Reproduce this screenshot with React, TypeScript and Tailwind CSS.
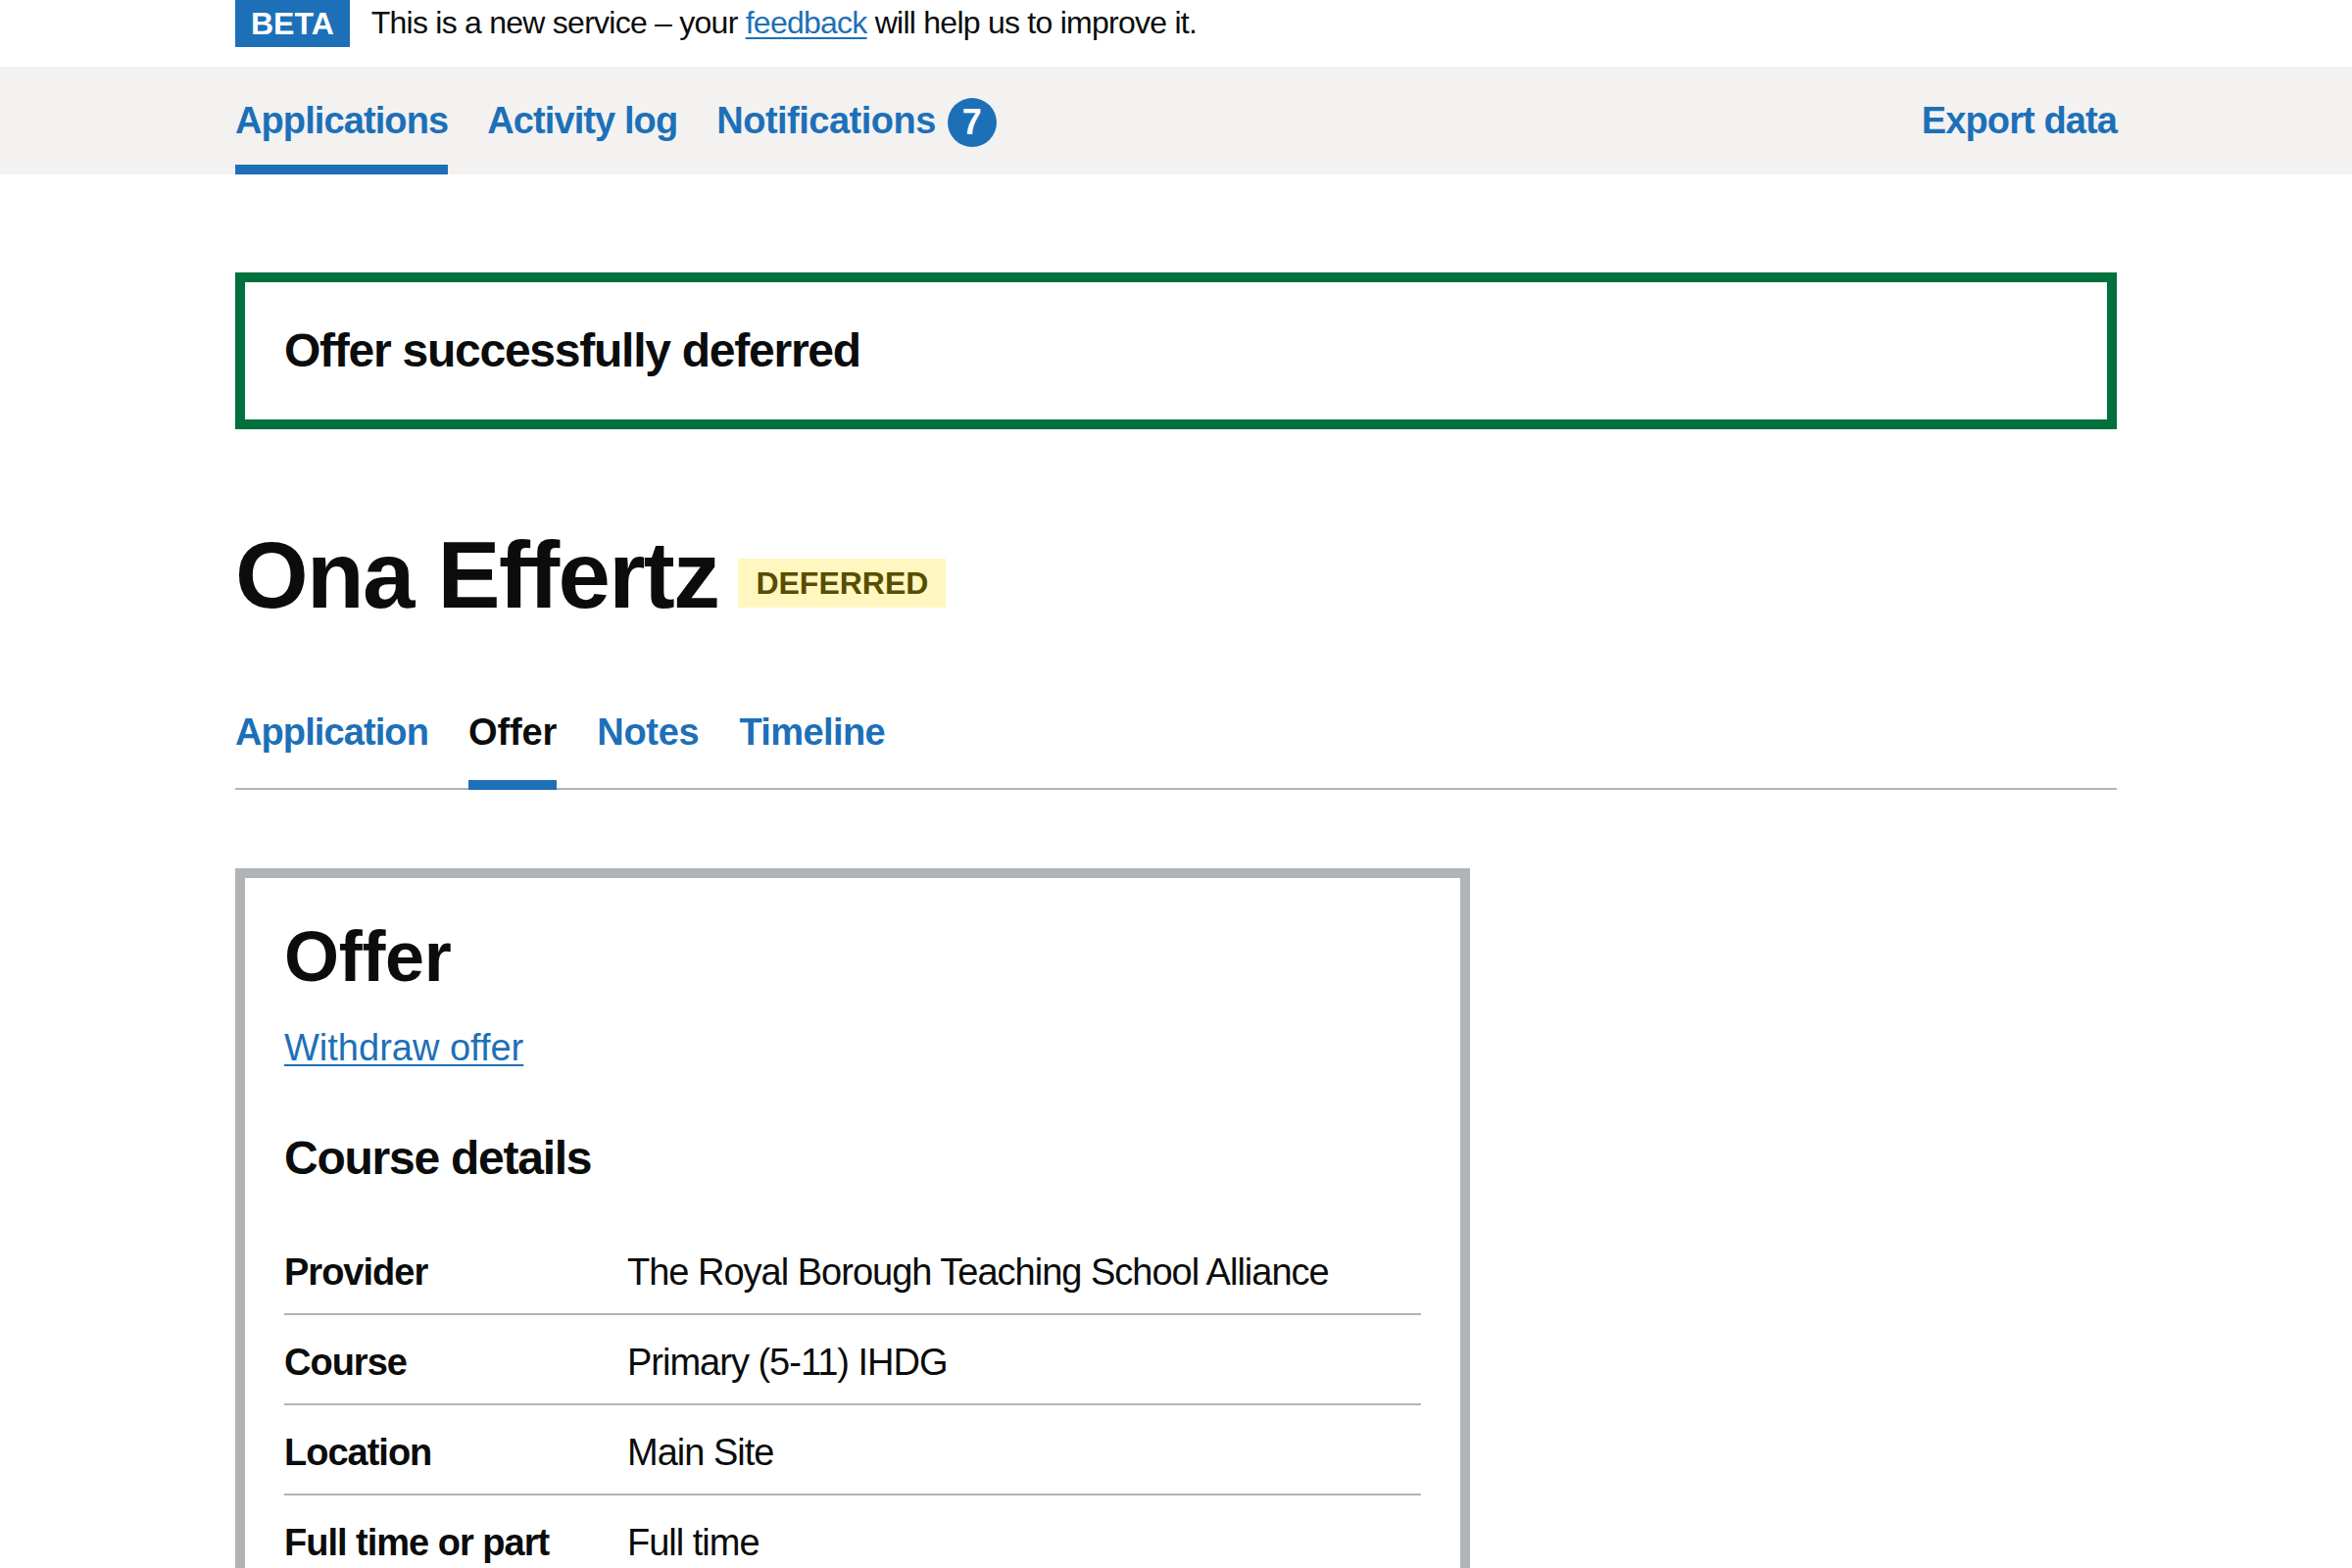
import React from "react";

const rows: { k: string; v: string }[] = [
  { k: "Provider", v: "The Royal Borough Teaching School Alliance" },
  { k: "Course", v: "Primary (5-11) IHDG" },
  { k: "Location", v: "Main Site" },
  { k: "Full time or part time", v: "Full time" },
  { k: "Qualification", v: "PGCE with QTS" },
];

const navItem =
  "flex items-center pt-[10px] border-b-[10px] text-[38px] leading-[50px] font-bold text-[#1d70b8]";
const tabItem =
  "mb-[-2px] pb-[24px] border-b-[10px] text-[38px] leading-[50px] font-bold";

export default function App() {
  return (
    <div className="min-h-screen bg-white text-[#0b0c0c] font-['Liberation_Sans',Arial,sans-serif]">
      {/* Phase banner */}
      <div className="w-[1920px] mx-auto h-[68px] flex items-start">
        <span className="bg-[#1d70b8] text-white font-bold text-[32px] leading-[48px] h-[48px] px-[16px]">
          BETA
        </span>
        <span className="ml-[22px] text-[32px] leading-[46px] tracking-[-0.75px]">
          This is a new service – your{" "}
          <a className="text-[#1d70b8] underline decoration-[2px] underline-offset-[4px]">feedback</a>{" "}
          will help us to improve it.
        </span>
      </div>

      {/* Primary nav */}
      <div className="bg-[#f3f2f1] h-[110px]">
        <div className="w-[1920px] mx-auto h-full flex items-stretch gap-[40px]">
          <a className={`${navItem} border-[#1d70b8] tracking-[-0.9px]`}>Applications</a>
          <a className={`${navItem} border-transparent tracking-[-0.9px]`}>Activity log</a>
          <a className={`${navItem} border-transparent tracking-[-0.5px]`}>
            Notifications
            <span className="ml-[12px] w-[50px] h-[50px] rounded-full bg-[#1d70b8] text-white text-[36px] leading-none tracking-normal flex items-center justify-center mt-[4px]">
              7
            </span>
          </a>
          <a className={`${navItem} border-transparent ml-auto tracking-[-0.9px]`}>Export data</a>
        </div>
      </div>

      <div className="w-[1920px] mx-auto">
        {/* Success banner */}
        <div className="mt-[100px] border-[10px] border-[#00703c] px-[40px] py-[40px]">
          <h2 className="text-[48px] leading-[60px] font-bold tracking-[-1.25px]">Offer successfully deferred</h2>
        </div>

        {/* Heading */}
        <div className="mt-[99px] flex items-start">
          <h1 className="text-[96px] leading-[100px] font-bold tracking-[-1.7px]">Ona Effertz</h1>
          <span className="ml-[20px] mt-[33px] h-[50px] px-[18px] flex items-center bg-[#fff7bf] text-[#594d00] font-bold text-[32px] leading-none">
            DEFERRED
          </span>
        </div>

        {/* Tabs */}
        <div className="mt-[85px] flex gap-[41px] border-b-2 border-[#b1b4b6]">
          <a className={`${tabItem} border-transparent text-[#1d70b8] tracking-[-0.9px]`}>Application</a>
          <a className={`${tabItem} border-[#1d70b8] text-[#0b0c0c] tracking-[-0.1px]`}>Offer</a>
          <a className={`${tabItem} border-transparent text-[#1d70b8] tracking-[-0.3px]`}>Notes</a>
          <a className={`${tabItem} border-transparent text-[#1d70b8] tracking-[-0.6px]`}>Timeline</a>
        </div>

        {/* Offer card */}
        <div className="mt-[80px] w-[1260px] border-[10px] border-[#b1b4b6] px-[40px] pt-[40px] pb-[60px]">
          <h2 className="text-[72px] leading-[80px] font-bold tracking-[-0.3px]">Offer</h2>
          <a className="block mt-[28px] text-[38px] leading-[50px] text-[#1d70b8] underline decoration-[2px] underline-offset-[4px] w-fit">
            Withdraw offer
          </a>
          <h3 className="mt-[58px] text-[48px] leading-[60px] font-bold tracking-[-1.25px]">Course details</h3>
          <dl className="mt-[38px]">
            {rows.map((r) => (
              <div key={r.k} className="flex border-b-2 border-[#b1b4b6] pt-[23px] pb-[17px] text-[38px] leading-[50px]">
                <dt className="w-[350px] shrink-0 pr-[40px] font-bold tracking-[-1px]">{r.k}</dt>
                <dd className="flex-1 tracking-[-1px]">{r.v}</dd>
              </div>
            ))}
          </dl>
        </div>
        <div className="h-[200px]" />
      </div>
    </div>
  );
}
